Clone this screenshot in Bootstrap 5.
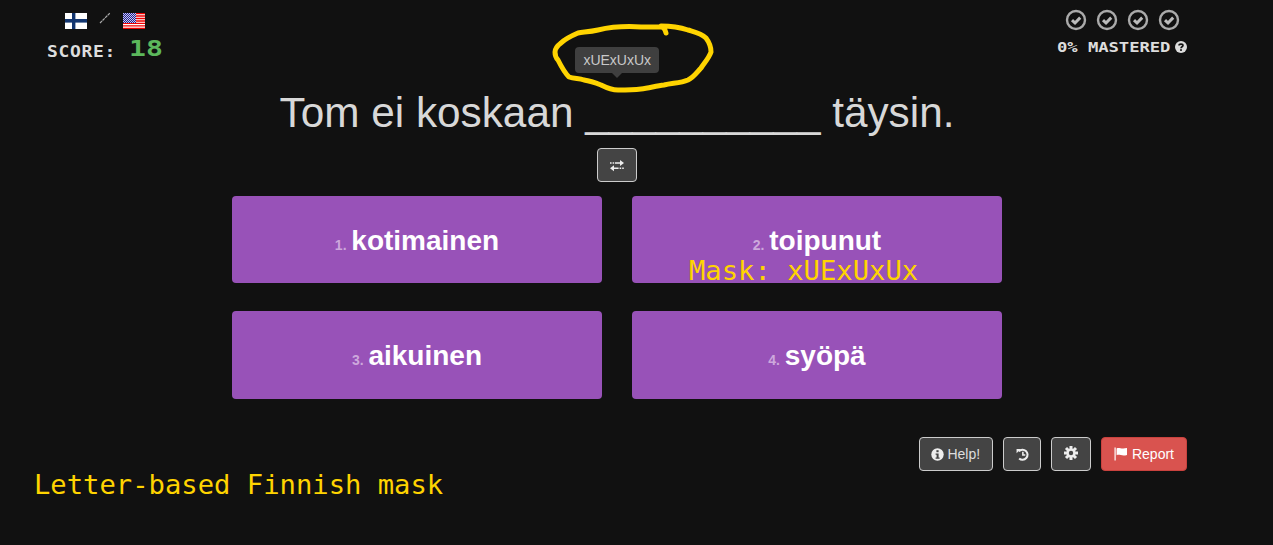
<!DOCTYPE html>
<html lang="fi">
<head>
  <meta charset="UTF-8">
  <title>Finnish mask</title>
  <link href="https://cdn.jsdelivr.net/npm/bootstrap@5.3.2/dist/css/bootstrap.min.css" rel="stylesheet">
  <style>
    body { background: #111; color: #ddd; font-family: "Liberation Sans", Arial, sans-serif; overflow: hidden; }
    .stage { width: 1140px; margin-left: 47px; }
    .top-row { height: 83px; }
    .pixel { font-family: "DejaVu Sans Mono", monospace; font-weight: 700; color: #ddd; line-height: 1; display: inline-block; transform-origin: left center; white-space: nowrap; }
    .score-box { width: 116px; padding-top: 13px; }
    .flags { height: 16px; gap: 12px; margin-bottom: 9px; }
    .flag-slash { margin-top: -6px; }
    .score-line { height: 24px; }
    .score-label { font-size: 15px; letter-spacing: .55px; transform: scaleX(1.2); margin-top: 4px; }
    .score-num { font-size: 22px; color: #5cb85c; transform: scaleX(1.28); margin-left: 82px; margin-top: -2px; }
    .master-box { width: 130px; padding-top: 9px; }
    .checks { gap: 9px; margin-bottom: 4px; }
    .master-line { height: 14px; }
    .master-label { font-size: 14px; letter-spacing: -.05px; transform: scaleX(1.23); }
    .master-help { margin-left: 118px; margin-top: -18px; display: block; }
    .question { height: 60px; font-size: 42.3px; line-height: 60px; font-weight: 400; color: #d8d8d8; margin: 0; white-space: nowrap; }
    .swap-btn, .tool-btn { background: #444; border: 1px solid #ccc; color: #ddd; border-radius: 4px; font-size: 14px; height: 34px; padding: 0 11px; }
    .swap-btn { width: 40px; margin-top: 5px; }
    .answers { width: 770px; margin: 14px auto 0; display: grid; grid-template-columns: 370px 370px; gap: 28px 30px; }
    .answer-btn { background: #9852b8; border: 0; height: 88px; color: #fff; font-size: 28px; font-weight: 700; border-radius: 4px; padding: 2px 0 0; word-spacing: -3px; }
    .answer-btn:first-child, .answer-btn:nth-child(2) { height: 87px; }
    .answer-num { font-size: 14px; font-weight: 700; color: #cda8dc; }
    .mask-note, .caption { font-family: "DejaVu Sans Mono", monospace; font-size: 27.2px; font-weight: 400; color: #ffd400; line-height: 1; white-space: nowrap; word-spacing: 0; }
    .mask-note { left: 57px; bottom: -1px; }
    .bottom-row { margin-top: 38px; margin-left: -13px; }
    .caption { padding-top: 34px; }
    .tools { gap: 10px; }
    .help-btn { padding: 0 12px 0 11px; }
    .history-btn { width: 38px; padding: 0; }
    .report-btn { background: #d9534f; border-color: #c9423e; color: #fff; padding: 0 12px; }
    .tool-btn svg { vertical-align: -2px; }
    .hint { left: 569px; top: 41px; font-family: "Liberation Sans", Arial, sans-serif; }
    .hint .tooltip-inner { background: #444; color: #ddd; border-radius: 4px; padding: 4px 8px; font-size: 14px; max-width: none; line-height: 18px; }
    .hint .tooltip-arrow { left: calc(50% - 6px); }
    .hint .tooltip-arrow::before { border-top-color: #444; }
    .scribble { left: 551px; top: 20px; z-index: 5; }
  </style>
</head>
<body>

  <svg class="scribble position-absolute" width="170" height="75" viewBox="550 20 170 75" fill="none" stroke="#ffd400" stroke-width="5" stroke-linecap="round" stroke-linejoin="round">
    <path d="M665 33 C664 29 662 27 660 27 L640 27 C625 26 610 27 597 30 C588 32 582 32 577 33 C570 36 564 39 560 43 C556 46 554 49 554 52 C554 56 555 58 557 60 C560 66 564 73 568 77 C574 79 578 78 583 80 C590 81 595 83 600 85 C606 88 610 90 617 90 C625 90 632 90 640 89 C648 88 655 86 663 85 C672 83 680 83 687 80 C693 77 696 72 700 68 C704 62 708 58 710 52 C710 46 708 42 705 38 C700 33 694 32 687 30 C678 27 670 26 660 26"/>
  </svg>

  <div class="tooltip bs-tooltip-top show hint position-absolute" role="tooltip">
    <div class="tooltip-arrow position-absolute"></div>
    <div class="tooltip-inner">xUExUxUx</div>
  </div>

  <div class="stage">
    <div class="top-row d-flex justify-content-between">
      <div class="score-box">
        <div class="flags d-flex justify-content-center align-items-center">
          <svg width="22" height="16" viewBox="0 0 22 16">
            <rect width="22" height="16" fill="#fff"/>
            <rect x="7" width="3.4" height="16" fill="#12356f"/>
            <rect y="6" width="22" height="3.6" fill="#12356f"/>
          </svg>
          <svg class="flag-slash" width="12" height="12" viewBox="0 0 12 12"><path d="M1 11 L11 1" stroke="#aaa" stroke-width="1.2" stroke-dasharray="3 .6"/></svg>
          <svg width="22" height="16" viewBox="0 0 22 16">
            <defs>
              <pattern id="stars" width="2" height="2" patternUnits="userSpaceOnUse">
                <rect width="2" height="2" fill="#23238e"/>
                <rect width="1" height="1" fill="#c8c8f0"/>
                <rect x="1" y="1" width="1" height="1" fill="#c8c8f0"/>
              </pattern>
            </defs>
            <rect width="22" height="16" fill="#fff"/>
            <path d="M0 0.6H22M0 3H22M0 5.5H22M0 8H22M0 10.4H22M0 12.9H22M0 15.3H22" stroke="#f00000" stroke-width="1.3"/>
            <rect width="13" height="10" fill="url(#stars)"/>
          </svg>
        </div>
        <div class="score-line d-flex align-items-center">
          <span class="pixel score-label">SCORE:</span>
          <span class="pixel score-num position-absolute">18</span>
        </div>
      </div>
      <div class="master-box">
        <div class="checks d-flex justify-content-center">
          <svg width="22" height="22" viewBox="0 0 22 22"><circle cx="11" cy="11" r="9" fill="none" stroke="#aaa" stroke-width="2.4"/><path d="M7 11.2 L10 14 L15.2 8.6" fill="none" stroke="#bbb" stroke-width="3"/></svg>
          <svg width="22" height="22" viewBox="0 0 22 22"><circle cx="11" cy="11" r="9" fill="none" stroke="#aaa" stroke-width="2.4"/><path d="M7 11.2 L10 14 L15.2 8.6" fill="none" stroke="#bbb" stroke-width="3"/></svg>
          <svg width="22" height="22" viewBox="0 0 22 22"><circle cx="11" cy="11" r="9" fill="none" stroke="#aaa" stroke-width="2.4"/><path d="M7 11.2 L10 14 L15.2 8.6" fill="none" stroke="#bbb" stroke-width="3"/></svg>
          <svg width="22" height="22" viewBox="0 0 22 22"><circle cx="11" cy="11" r="9" fill="none" stroke="#aaa" stroke-width="2.4"/><path d="M7 11.2 L10 14 L15.2 8.6" fill="none" stroke="#bbb" stroke-width="3"/></svg>
        </div>
        <div class="master-line">
          <span class="pixel master-label">0% MASTERED</span>
          <svg class="master-help" width="12" height="12" viewBox="0 0 12 12"><circle cx="6" cy="6" r="6" fill="#ddd"/><path d="M4 4.6 C4 2.6 8 2.6 8 4.6 C8 5.8 6 5.8 6 7.2" fill="none" stroke="#111" stroke-width="1.6"/><rect x="5.1" y="8.2" width="1.8" height="1.7" fill="#111"/></svg>
        </div>
      </div>
    </div>

    <h1 class="question text-center">Tom ei koskaan __________ täysin.</h1>

    <div class="text-center">
      <button class="btn swap-btn p-0" type="button" aria-label="Swap">
        <svg width="14" height="12" viewBox="0 0 14 12" fill="#eee">
          <path d="M0 2.2h1.6v1.6H0zM2.6 2.2h1.6v1.6H2.6zM5 2.2h5V0l4 3-4 3V3.8H5z"/>
          <path d="M9.6 7.4h1.6V9H9.6zM12.2 7.4h1.6V9h-1.6zM8.6 9H4v2.2L0 8.2l4-3v2.2h4.6z"/>
        </svg>
      </button>
    </div>

    <div class="answers">
      <button class="btn answer-btn" type="button"><span class="answer-num">1.</span> kotimainen</button>
      <button class="btn answer-btn position-relative" type="button"><span class="answer-num">2.</span> toipunut
        <span class="mask-note position-absolute">Mask: xUExUxUx</span>
      </button>
      <button class="btn answer-btn" type="button"><span class="answer-num">3.</span> aikuinen</button>
      <button class="btn answer-btn" type="button"><span class="answer-num">4.</span> syöpä</button>
    </div>

    <div class="bottom-row d-flex justify-content-between align-items-start">
      <div class="caption">Letter-based Finnish mask</div>
      <div class="tools d-flex">
        <button class="btn tool-btn help-btn" type="button">
          <svg width="13" height="13" viewBox="0 0 13 13"><circle cx="6.5" cy="6.5" r="6.2" fill="#eee"/><rect x="5.4" y="2.2" width="2.2" height="2" fill="#444"/><path d="M4.6 5.4h3v4h1v1.3H4.6V9.4h1V6.7h-1z" fill="#444"/></svg>
          Help!
        </button>
        <button class="btn tool-btn history-btn" type="button" aria-label="History">
          <svg width="13" height="13" viewBox="0 0 14 14" fill="none" stroke="#eee" stroke-width="2.2"><path d="M3 3.6 A5.4 5.4 0 1 1 3.4 11.2"/><path d="M7.4 4 V7.6 H10" stroke-width="1.7"/><path d="M0.6 1 L5.2 1 L0.6 5.6 Z" fill="#eee" stroke="none"/></svg>
        </button>
        <button class="btn tool-btn" type="button" aria-label="Settings">
          <svg width="16" height="16" viewBox="0 0 16 16"><g stroke="#eee" stroke-width="3"><path d="M8 1V15M1 8H15M3 3L13 13M13 3L3 13"/></g><circle cx="8" cy="8" r="4.6" fill="#eee"/><circle cx="8" cy="8" r="2.2" fill="#444"/></svg>
        </button>
        <button class="btn tool-btn report-btn" type="button">
          <svg width="14" height="14" viewBox="0 0 14 14" fill="#fff"><rect x="0.5" y="0.5" width="1.2" height="13"/><path d="M2.6 1.4 C5 0 7 2.4 13 1 V8 C8 9.6 5.6 7 2.6 8.2Z"/></svg>
          Report
        </button>
      </div>
    </div>
  </div>

</body>
</html>
